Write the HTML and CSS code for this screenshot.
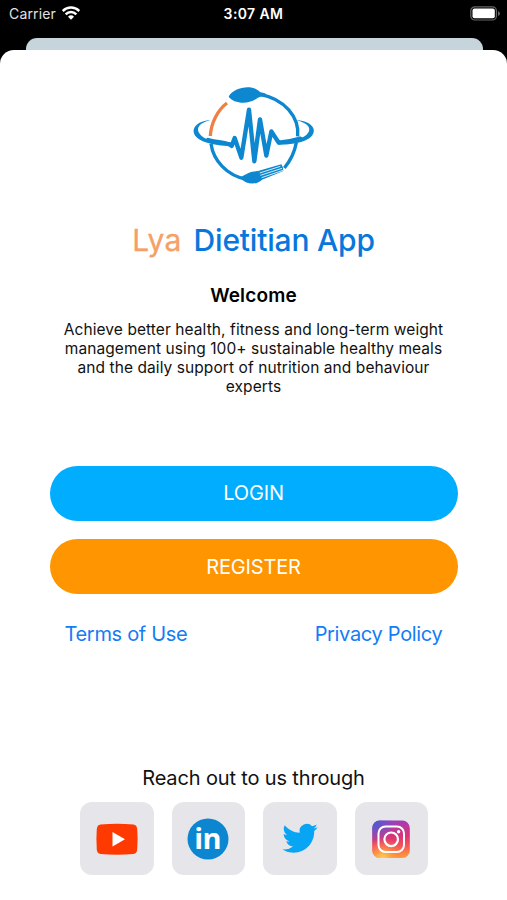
FILE: index.html
```html
<!DOCTYPE html>
<html lang="en">
<head>
<meta charset="utf-8">
<title>Lya Dietitian App</title>
<link rel="stylesheet" href="styles.css">
</head>
<body>
<header class="status">
  <div class="carrier"><span>Carrier</span>
    <svg class="wifi" viewBox="0 0 54 42"><g fill="none" stroke="#fff" stroke-width="7.500"><path d="M2 15C16 1 38 1 52 15"/><path d="M11 25C20 16 34 16 43 25"/></g><path d="M18 32Q27 24 36 32L27 41Z" fill="#fff"/></svg>
  </div>
  <div class="time">3:07 AM</div>
  <div class="power"><svg class="battery" viewBox="0 0 30 16"><rect x=".8" y=".8" width="25.6" height="13.2" rx="4" fill="none" stroke="#66666a" stroke-width="1.2"/><rect x="2.5" y="2.5" width="22.3" height="9.8" rx="2" fill="#fff"/><path d="M28 5v5q2-1 2-2.500t-2-2.500" fill="#66666a"/></svg></div>
</header>
<div class="backdrop"></div>
<main class="sheet">
  <svg class="logo" viewBox="0 0 420 330" role="img" aria-label="Lya">
    <g fill="none" stroke="#0c87d0">
      <path d="M230 43C305 56 350 113 344 169" stroke-width="10"/>
      <path d="M340 188Q332 231 304 264" stroke-width="10"/>
      <path d="M84 191C91 240 130 288 194 299" stroke-width="10"/>
      <path d="M75 180C112 190 133 186 146 198L155 174L175 233L198 89L214 244L231 118L250 227L265 154L287 188C315 186 336 181 352 176" stroke-width="13" stroke-linecap="round" stroke-linejoin="round"/>
    </g>
    <path d="M82 168C84 130 103 91 132 69" fill="none" stroke="#ed8145" stroke-width="10"/>
    <g fill="#0c87d0">
      <path d="M137 50C151 22 210 10 232 37C245 38 253 43 250 48C237 49 226 50 218 58C191 75 150 69 137 50Z"/>
      <path d="M82 121C44 121 12 151 47 177C78 197 123 197 151 198L148 187C107 187 75 184 55 167C34 147 49 128 82 121Z"/>
      <path d="M340 121C382 121 411 151 379 175C350 192 318 194 286 194L286 184C319 184 351 180 370 165C391 146 373 128 340 121Z"/>
      <path d="M171 293C193 278 207 274 225 273L295 253Q301 260 301 273L237 299C220 316 190 315 171 293Z"/>
    </g>
    <path d="M230 279L292 259M232 286L297 265M236 293L300 271" stroke="#fff" stroke-width="2.500" fill="none"/>
  </svg>
  <h1 class="title"><span class="lya">Lya</span><span class="app">Dietitian App</span></h1>
  <h2 class="welcome">Welcome</h2>
  <p class="intro"><span>Achieve better health, fitness and long-term weight</span><span>management using 100+ sustainable healthy meals</span><span>and the daily support of nutrition and behaviour</span><span>experts</span></p>
  <div class="actions">
    <button class="btn login">LOGIN</button>
    <button class="btn register">REGISTER</button>
  </div>
  <nav class="links"><a>Terms of Use</a><a>Privacy Policy</a></nav>
  <p class="reach">Reach out to us through</p>
  <div class="socials">
    <a class="tile"><svg viewBox="0 0 48 48" aria-label="YouTube"><path d="M7.500 9.600Q24 8 40.500 9.600Q43.800 10 44.200 14Q45 24 44.200 34.500Q43.800 38.600 40.500 39Q24 40.500 7.500 39Q4.200 38.600 3.800 34.500Q3 24 3.800 14Q4.200 10 7.500 9.600Z" fill="#ff3a00"/><path d="M19.500 17v14.500L32 24.250Z" fill="#fff"/></svg></a>
    <a class="tile"><svg viewBox="0 0 48 48" aria-label="LinkedIn"><circle cx="24" cy="24" r="20.500" fill="#0c86d0"/><text class="in" x="23.700" y="34" text-anchor="middle">in</text></svg></a>
    <a class="tile"><svg viewBox="0 0 48 48" aria-label="Twitter"><path transform="translate(6.300 5.500) scale(1.480)" d="M23.950 4.570a10 10 0 0 1-2.820.78 4.960 4.960 0 0 0 2.160-2.730c-.95.56-2 .96-3.120 1.190a4.920 4.920 0 0 0-8.390 4.480C7.690 8.090 4.070 6.130 1.640 3.160a4.920 4.920 0 0 0 1.520 6.570 4.900 4.900 0 0 1-2.230-.61v.06c0 2.390 1.690 4.380 3.950 4.830a5 5 0 0 1-2.210.08 4.940 4.940 0 0 0 4.600 3.420A9.870 9.870 0 0 1 0 19.540a14 14 0 0 0 7.560 2.210c9.050 0 14-7.500 14-13.980v-.63a10 10 0 0 0 2.390-2.570Z" fill="#08a5f4"/></svg></a>
    <a class="tile"><svg viewBox="0 0 48 48" aria-label="Instagram"><defs><linearGradient id="v" x1=".45" y1="0" x2=".55" y2="1"><stop offset="0" stop-color="#9b3dbd"/><stop offset=".45" stop-color="#dd3276"/><stop offset=".75" stop-color="#f85c50"/><stop offset="1" stop-color="#ff9b37"/></linearGradient><radialGradient id="b" cx="0" cy="0" r=".65"><stop offset="0" stop-color="#405fd8"/><stop offset="1" stop-color="#5063d8" stop-opacity="0"/></radialGradient><radialGradient id="y" cx=".28" cy="1" r=".55"><stop offset="0" stop-color="#ffd34b"/><stop offset="1" stop-color="#ff7845" stop-opacity="0"/></radialGradient></defs><rect x="5.200" y="5.500" width="37.600" height="37.500" rx="7.500" fill="url(#v)"/><rect x="5.200" y="5.500" width="37.600" height="37.500" rx="7.500" fill="url(#b)"/><rect x="5.200" y="5.500" width="37.600" height="37.500" rx="7.500" fill="url(#y)"/><g fill="none" stroke="#fff" stroke-width="2"><rect x="11.500" y="11.500" width="25.500" height="25.500" rx="7"/><circle cx="24.200" cy="24.300" r="6.800" stroke-width="2.200"/></g><circle cx="31.600" cy="16.800" r="1.700" fill="#fff"/></svg></a>
  </div>
</main>
</body>
</html>
```
FILE: styles.css
```css
* { box-sizing: border-box; }
body {
  margin: 0;
  width: 507px;
  height: 900px;
  overflow: hidden;
  background: #000;
  font-family: Inter, "Liberation Sans", sans-serif;
  color: #111;
  display: flex;
  flex-direction: column;
}
.status {
  height: 38px;
  flex: none;
  padding: 5px 7px 0 9px;
  display: grid;
  grid-template-columns: 1fr auto 1fr;
  align-items: start;
  line-height: 18px;
  color: #fff;
}
.carrier { display: flex; gap: 6px; font-size: 14px; color: #e2e2e2; letter-spacing: .15px; }
.wifi { width: 18px; height: 14px; margin-top: 1px; }
.time { font-size: 14px; font-weight: 600; letter-spacing: .4px; margin-right: 2px; }
.power { display: flex; justify-content: flex-end; }
.battery { width: 30px; height: 16px; margin-top: 1px; }
.backdrop { flex: none; height: 12px; margin: 0 24.500px 0 25.500px; border-radius: 11px 11px 0 0; background: #c6d4db; }
.sheet {
  flex: 1;
  background: #fff;
  border-radius: 14px 14px 0 0;
  display: flex;
  flex-direction: column;
  align-items: center;
}
.logo { width: 140px; height: 110px; margin: 30px 1.500px 0 0; flex: none; }
.title { margin: 30px 0 0; height: 40px; line-height: 40px; font-size: 30px; font-weight: 400; display: flex; gap: 12px; }
.lya { color: #f5a066; letter-spacing: .3px; -webkit-text-stroke: .3px #f5a066; }
.app { color: #0877dc; font-weight: 500; letter-spacing: -.2px; }
.welcome { margin: 24px 0 0; font-size: 19px; line-height: 24px; font-weight: 600; letter-spacing: .15px; color: #000; }
.intro { margin: 12px 0 0; font-size: 15.500px; line-height: 19px; letter-spacing: .08px; text-align: center; }
.intro span { display: block; white-space: nowrap; }
.actions { margin-top: 69.500px; display: flex; flex-direction: column; gap: 18.500px; }
.btn { width: 408px; height: 55px; border: 0; border-radius: 28px; padding: 0; font: 400 20px Inter, sans-serif; letter-spacing: -.15px; color: #fff; }
.login { background: #00adff; }
.register { background: #ff9500; }
.links { width: 378px; margin-top: 28px; display: flex; justify-content: space-between; font-size: 20px; line-height: 24px; letter-spacing: -.32px; color: #147cf5; }
.reach { margin: 120px 0 0; font-size: 20px; line-height: 24px; letter-spacing: -.15px; }
.socials { margin: 12px 0 0 1px; display: flex; gap: 18px; }
.tile { width: 73.500px; height: 73px; border-radius: 12px; background: #e5e5ea; display: grid; place-items: center; }
.tile svg { width: 48px; height: 48px; }
.in { font: 700 29px "Open Sans", sans-serif; fill: #fff; letter-spacing: -.5px; }
```
